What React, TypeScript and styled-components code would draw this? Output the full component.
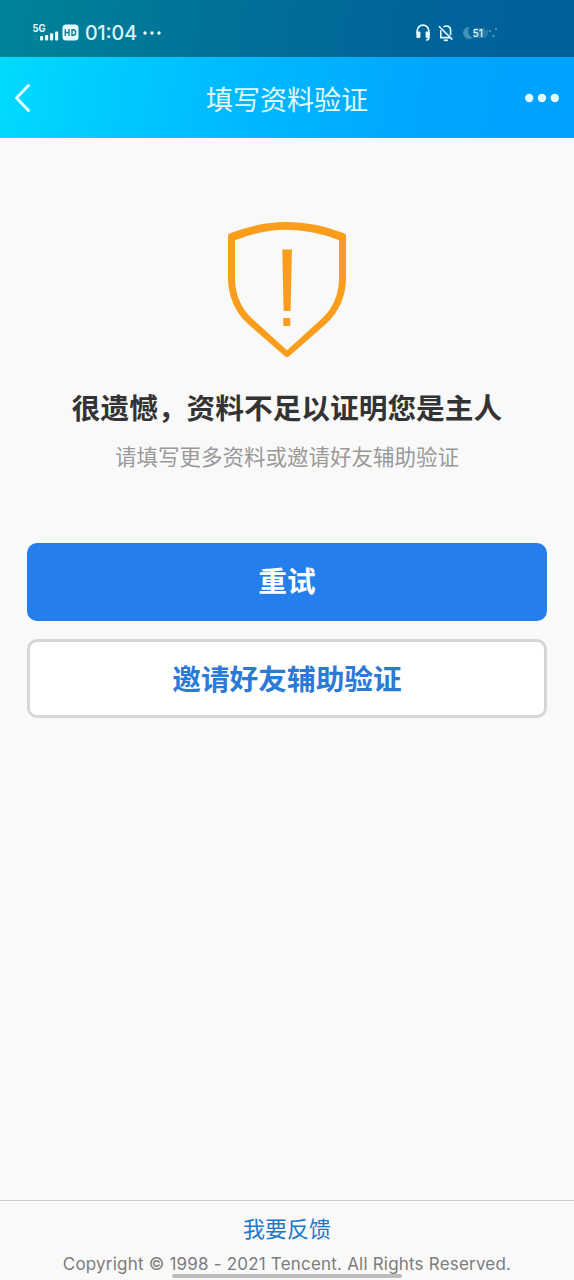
import React from 'react';
import styled, { createGlobalStyle } from 'styled-components';

const GlobalStyle = createGlobalStyle`
  * { box-sizing: border-box; }
  body { margin: 0; background: #f9f9f9; }
  button { font-family: inherit; cursor: pointer; }
`;

const Screen = styled.div`
  width: 100%;
  height: 1280px;
  display: flex;
  flex-direction: column;
  overflow: hidden;
  background: #f9f9f9;
  font-family: Roboto, 'Noto Sans CJK SC', sans-serif;
`;

const Header = styled.header`
  flex: none;
  height: 138px;
  background: linear-gradient(100deg, #00dcff 0%, #00beff 36%, #00a6ff 74%, #00a1ff 100%);
`;

const StatusBar = styled.div`
  height: 57px;
  padding: 8px 76px 0 32px;
  display: flex;
  justify-content: space-between;
  align-items: center;
  background: rgba(0, 0, 0, 0.4);
  color: #e6fdff;
`;

const StatusGroup = styled.div<{ $gap: number }>`
  display: flex;
  align-items: center;
  gap: ${({ $gap }) => $gap}px;
  svg { display: block; }
`;

const Clock = styled.time`
  margin: 0 2px 0 3px;
  font: 400 20px/24px Inter, sans-serif;
  width: 52px;
  letter-spacing: 0;
  white-space: nowrap;
  -webkit-text-stroke: 0.2px #e6fdff;
`;

const NavBar = styled.nav`
  height: 81px;
  padding: 0 14px;
  display: grid;
  grid-template-columns: 60px 1fr 60px;
  align-items: center;
`;

const NavButton = styled.button<{ $align: string }>`
  border: 0;
  padding: 0;
  background: none;
  display: flex;
  justify-content: ${({ $align }) => $align};
`;

const Title = styled.h1`
  margin: 0;
  padding-top: 6px;
  text-align: center;
  color: #e0fbff;
  font-size: 27px;
  line-height: 40px;
  font-weight: 400;
`;

const Main = styled.main`
  flex: 1;
  padding: 83px 27px 0;
  display: flex;
  flex-direction: column;
  align-items: center;
`;

const Heading = styled.h2`
  margin: 29px 0 0;
  color: #333;
  font-size: 28.7px;
  line-height: 42px;
  font-weight: 700;
  white-space: nowrap;
`;

const Hint = styled.p`
  margin: 12px 0 69px;
  color: #999;
  font-size: 21.5px;
  line-height: 32px;
  white-space: nowrap;
`;

const ActionButton = styled.button<{ $primary?: boolean }>`
  width: 100%;
  height: ${({ $primary }) => ($primary ? 78 : 79)}px;
  margin-bottom: 18px;
  padding: ${({ $primary }) => ($primary ? '0' : '3px 0 0')};
  border: ${({ $primary }) => ($primary ? '0' : '3px solid #d6d6d6')};
  border-radius: 10px;
  background: ${({ $primary }) => ($primary ? '#247fec' : '#fff')};
  color: ${({ $primary }) => ($primary ? '#fff' : '#2b7bd6')};
  font-size: 28.7px;
  line-height: 42px;
  font-weight: 700;
`;

const Footer = styled.footer`
  position: relative;
  flex: none;
  height: 80px;
  border-top: 1.5px solid #cbcbcb;
  padding-top: 13px;
  text-align: center;
`;

const Feedback = styled.a`
  display: block;
  color: #1c78cc;
  font-size: 22px;
  line-height: 32px;
`;

const Copyright = styled.p`
  margin: 6px 0 0;
  color: #7c7c7c;
  font-family: Inter, sans-serif;
  font-size: 17px;
  line-height: 24px;
  letter-spacing: 0.2px;
  white-space: nowrap;
`;

const HomeIndicator = styled.div`
  position: absolute;
  left: 172px;
  bottom: 2px;
  width: 230px;
  height: 4px;
  border-radius: 2px;
  background: #bcbcbc;
`;

const SignalIcon = () => (
  <svg width="27" height="20" viewBox="0 0 27 20" fill="currentColor">
    <text x="0.5" y="8.6" fontFamily="Inter, sans-serif" fontSize="10" fontWeight="700" textLength="13" lengthAdjust="spacingAndGlyphs">5G</text>
    <path d="M4 12.5v1.5M4 16v1.5M1.8 15h1" stroke="currentColor" opacity=".35" />
    <rect x="8" y="13" width="3.2" height="4.5" rx="1" />
    <rect x="13" y="12" width="3.2" height="5.5" rx="1" />
    <rect x="18" y="10.3" width="3.2" height="7.2" rx="1" />
    <rect x="23" y="8.5" width="3.2" height="9" rx="1" />
  </svg>
);

const HdIcon = () => (
  <svg width="17" height="17" viewBox="0 0 17 17">
    <rect x="0.5" y="0.5" width="16" height="16" rx="3.5" fill="currentColor" />
    <path d="M3.3 5v7M7 5v7M3.3 8.5H7M10 5.7v5.6h1.4c1.5 0 2.2-.9 2.2-2.8s-.7-2.8-2.2-2.8z" fill="none" stroke="#087e98" strokeWidth="1.4" />
  </svg>
);

const StatusDots = () => (
  <svg width="20" height="4" viewBox="0 0 20 4" fill="currentColor">
    <circle cx="3" cy="2" r="1.7" /><circle cx="10" cy="2" r="1.7" /><circle cx="17" cy="2" r="1.7" />
  </svg>
);

const HeadphonesIcon = () => (
  <svg width="14" height="18" viewBox="0 0 14 18">
    <path d="M1.2 9.5V7a5.8 5.8 0 0 1 11.6 0v6.5c0 1.5-.9 2.4-2.6 2.6" fill="none" stroke="currentColor" strokeWidth="1.7" />
    <rect x="0.4" y="7.5" width="4" height="6.5" rx="1" fill="currentColor" />
    <rect x="9.6" y="7.5" width="4" height="6.5" rx="1" fill="currentColor" />
  </svg>
);

const MutedBellIcon = () => (
  <svg width="16" height="18" viewBox="0 0 16 18" fill="none" stroke="currentColor" strokeWidth="1.6">
    <path d="M1 2.2l13.4 13.4" />
    <path d="M2.8 6.2v7.4H12M5.6 3.1C6.5 2.2 7.2 2 8 2c2.8 0 4.6 1.9 4.6 4.6v4.6" />
    <path d="M5.8 16.3h4" strokeWidth="1.8" />
  </svg>
);

const BatteryIcon = () => (
  <svg width="36" height="16" viewBox="0 0 36 16" fill="currentColor">
    <g opacity=".3">
      <path d="M7.5 2A6 6 0 1 0 11 12.6 6.8 6.8 0 0 1 7.5 2z" />
      <path d="M12 3h11v2h3v6h-2v2H12z" opacity=".55" />
      <circle cx="28" cy="6" r="1.3" /><circle cx="31.5" cy="11" r="1.3" /><circle cx="34" cy="4" r="1.2" />
    </g>
    <text x="10.5" y="11.5" fontFamily="Inter, sans-serif" fontSize="10" fontWeight="500">51</text>
  </svg>
);

const BackIcon = () => (
  <svg width="18" height="30" viewBox="0 0 18 30" fill="none">
    <path d="M14.5 2.5L2.5 15l12 12.5" stroke="#e0fdff" strokeWidth="3" strokeLinecap="round" strokeLinejoin="round" />
  </svg>
);

const MoreIcon = () => (
  <svg width="36" height="10" viewBox="0 0 36 10" fill="#e0fdff">
    <circle cx="5.2" cy="5" r="4.2" /><circle cx="18" cy="5" r="4.2" /><circle cx="30.8" cy="5" r="4.2" />
  </svg>
);

const ShieldIcon = () => (
  <svg width="120" height="138" viewBox="0 0 120 138" fill="#fa9d1c">
    <path
      fillRule="evenodd"
      d="M3 12.3Q60-10.2 117 12.3Q119 13 119 15V57C119 75 112 91 99.5 102.5L63 134.5Q60 138 57 134.5L20.5 102.5C8 91 1 75 1 57V15Q1 13 3 12.3ZM8 19.3V57C8 73 14 87.5 25 97.5L60 129.3 95 97.5C106 87.5 112 73 112 57V19.3Q60-1.7 8 19.3Z"
    />
    <path d="M55.3 28.5h9.6l-1.3 61.5h-7zM56.3 97h7v8h-7z" />
  </svg>
);

export default function App() {
  return (
    <Screen>
      <GlobalStyle />
      <Header>
        <StatusBar>
          <StatusGroup $gap={3}>
            <SignalIcon />
            <HdIcon />
            <Clock>01:04</Clock>
            <StatusDots />
          </StatusGroup>
          <StatusGroup $gap={8}>
            <HeadphonesIcon />
            <MutedBellIcon />
            <BatteryIcon />
          </StatusGroup>
        </StatusBar>
        <NavBar>
          <NavButton $align="flex-start" aria-label="返回"><BackIcon /></NavButton>
          <Title>填写资料验证</Title>
          <NavButton $align="flex-end" aria-label="更多"><MoreIcon /></NavButton>
        </NavBar>
      </Header>
      <Main>
        <ShieldIcon />
        <Heading>很遗憾，资料不足以证明您是主人</Heading>
        <Hint>请填写更多资料或邀请好友辅助验证</Hint>
        <ActionButton $primary>重试</ActionButton>
        <ActionButton>邀请好友辅助验证</ActionButton>
      </Main>
      <Footer>
        <Feedback>我要反馈</Feedback>
        <HomeIndicator />
        <Copyright>Copyright © 1998 - 2021 Tencent. All Rights Reserved.</Copyright>
      </Footer>
    </Screen>
  );
}
